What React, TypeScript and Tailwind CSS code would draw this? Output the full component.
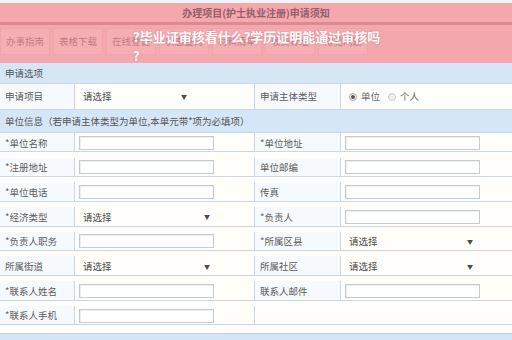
const tabs = ["办事指南", "表格下载", "在线登记", "状态查询", "材料清单", "收费标准", "常见问题"];

type Cell =
  | { kind: "input" }
  | { kind: "select"; arrow: string }
  | { kind: "radio" };

interface Row {
  left: [string, Cell];
  right?: [string, Cell];
}

const rows: Row[] = [
  { left: ["*单位名称", { kind: "input" }], right: ["*单位地址", { kind: "input" }] },
  { left: ["*注册地址", { kind: "input" }], right: ["单位邮编", { kind: "input" }] },
  { left: ["*单位电话", { kind: "input" }], right: ["传真", { kind: "input" }] },
  {
    left: ["*经济类型", { kind: "select", arrow: "w-[131px]" }],
    right: ["*负责人", { kind: "input" }],
  },
  {
    left: ["*负责人职务", { kind: "input" }],
    right: ["*所属区县", { kind: "select", arrow: "w-[128px]" }],
  },
  {
    left: ["所属街道", { kind: "select", arrow: "w-[131px]" }],
    right: ["所属社区", { kind: "select", arrow: "w-[128px]" }],
  },
  { left: ["*联系人姓名", { kind: "input" }], right: ["联系人邮件", { kind: "input" }] },
  { left: ["*联系人手机", { kind: "input" }] },
];

function Field({ cell }: { cell: Cell }) {
  if (cell.kind === "input") {
    return (
      <div className="h-[14px] w-[135px] border border-[#c3ccd2] bg-white shadow-[inset_1px_1px_1px_rgba(0,0,0,0.07)]" />
    );
  }
  if (cell.kind === "select") {
    return (
      <div className={`flex ${cell.arrow} items-center justify-between pl-1 text-[#4a4a4a]`}>
        <span>请选择</span>
        <span className="text-[6px]">▼</span>
      </div>
    );
  }
  return (
    <div className="flex items-center gap-1 pl-1 text-[#666]">
      <span className="flex h-[8px] w-[8px] items-center justify-center rounded-full border border-[#9aa4ab] bg-white">
        <span className="h-[4px] w-[4px] rounded-full bg-[#555]" />
      </span>
      <span>单位</span>
      <span className="ml-1 h-[8px] w-[8px] rounded-full border border-[#c3cbd0] bg-[#eef1f3]" />
      <span>个人</span>
    </div>
  );
}

function Label({ text }: { text: string }) {
  return <div className="flex items-center bg-[#f7fafc] pl-[5px] text-[#5c5c5c]">{text}</div>;
}

function Value({ cell }: { cell: Cell }) {
  return (
    <div className="flex items-center border-l border-[#c9d8e3] bg-[#fffefb] pl-1">
      <Field cell={cell} />
    </div>
  );
}

export default function App() {
  return (
    <div
      className="relative h-[340px] w-[512px] overflow-hidden bg-[#fffefb] text-[9.5px]"
      style={{ fontFamily: '"Noto Sans CJK SC", "Noto Sans", sans-serif' }}
    >
      {/* pink header */}
      <div className="border-t-[3px] border-[#eef6f8] bg-[#f4a7ad]">
        <div className="flex h-[19px] items-center justify-center text-[10px] font-bold text-[#93606a]">
          办理项目(护士执业注册)申请须知
        </div>
        <div className="h-[3px] bg-[#d98a93]" />
        <div className="flex h-[38px] gap-[3px] pt-[3px] pb-[8px]">
          {tabs.map((t) => (
            <div
              key={t}
              className="flex w-[50px] items-center justify-center border border-[#eea6ac] bg-[#f5afb4] text-[#c47a85]"
            >
              {t}
            </div>
          ))}
        </div>
      </div>

      <div className="absolute top-[27px] left-[133px] text-[13px] leading-[19px] font-bold text-white [text-shadow:0_0_2px_rgba(200,80,90,0.5)]">
        ?毕业证审核看什么?学历证明能通过审核吗
        <br />?
      </div>

      {/* form */}
      <div className="flex h-[21px] items-center border-b border-[#c9d8e3] bg-[#d5e7f7] pl-[5px] text-[#555]">
        申请选项
      </div>
      <div className="grid h-[26px] grid-cols-[74px_180px_86px_172px] border-b border-[#c9d8e3]">
        <Label text="申请项目" />
        <div className="flex items-center border-l border-[#c9d8e3] bg-[#fffefb] pl-1">
          <Field cell={{ kind: "select", arrow: "w-[108px]" }} />
        </div>
        <div className="flex items-center border-l border-[#c9d8e3] bg-[#f7fafc] pl-[5px] text-[#5c5c5c]">
          申请主体类型
        </div>
        <div className="flex items-center border-l border-[#c9d8e3] bg-[#fffefb] pl-1">
          <Field cell={{ kind: "radio" }} />
        </div>
      </div>
      <div className="flex h-[23px] items-center border-b border-[#c9d8e3] bg-[#d5e7f7] pl-[5px] text-[#555]">
        单位信息（若申请主体类型为单位,本单元带*项为必填项）
      </div>
      {rows.map((r) => (
        <div key={r.left[0]} className="grid h-[24.7px] grid-cols-[74px_180px_86px_172px]">
          <Label text={r.left[0]} />
          <Value cell={r.left[1]} />
          {r.right ? (
            <>
              <div className="flex items-center border-l border-[#c9d8e3] bg-[#f7fafc] pl-[5px] text-[#5c5c5c]">
                {r.right[0]}
              </div>
              <Value cell={r.right[1]} />
            </>
          ) : (
            <div className="col-span-2 border-l border-[#c9d8e3]" />
          )}
          <div className="col-span-4 -mt-px h-px bg-[#c9d8e3]" />
        </div>
      ))}
      <div className="mt-[2px] h-[10px] border-t border-[#bcd3e6] bg-[#d3e6f7]" />
    </div>
  );
}
